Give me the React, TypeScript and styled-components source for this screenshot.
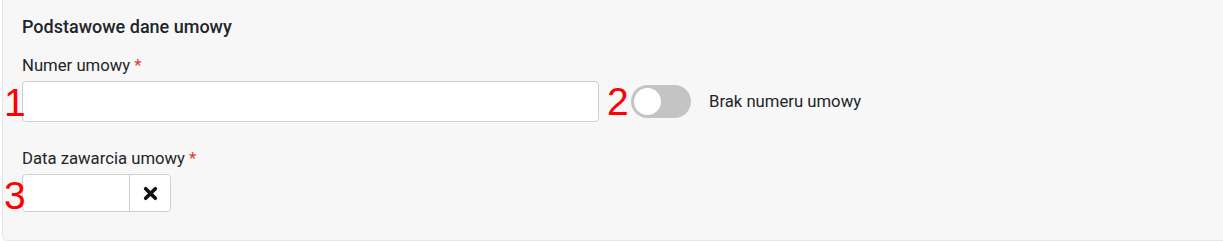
import React from "react";
import styled, { createGlobalStyle } from "styled-components";

const Global = createGlobalStyle`
  html, body { margin: 0; padding: 0; background: #ffffff; }
  body { font-family: Roboto, "Noto Sans", sans-serif; color: #212529; }
`;

const Panel = styled.section`
  margin: -10px 0 0 2px;
  padding: 27px 20px 28px 19px;
  background: #f7f7f7;
  border: 1px solid #e6e6e6;
  border-top: none;
  border-right: none;
  border-radius: 0 0 0 5px;
  box-sizing: border-box;
  height: 251px;
`;

const Title = styled.h3`
  margin: 0 0 20px 0;
  font-size: 18px;
  font-weight: 500;
  line-height: 20px;
  color: #212529;
`;

const Field = styled.div`
  margin-bottom: 28px;
`;

const Label = styled.label`
  display: block;
  font-size: 16.7px;
  line-height: 18px;
  margin-bottom: 6px;
  color: #212529;
`;

const Req = styled.span`
  color: #e53935;
  margin-left: 4px;
`;

const Row = styled.div`
  display: flex;
  align-items: center;
`;

const Marked = styled.div`
  position: relative;
  display: flex;
`;

const Mark = styled.span<{ $left: number; $top: number }>`
  position: absolute;
  left: ${(p) => p.$left}px;
  top: ${(p) => p.$top}px;
  font-family: "Liberation Sans", Arial, sans-serif;
  font-size: 39px;
  line-height: 39px;
  color: #ff0000;
  pointer-events: none;
`;

const TextInput = styled.input`
  width: 577px;
  height: 41px;
  box-sizing: border-box;
  border: 1px solid #cfcfcf;
  border-radius: 4px;
  background: #fff;
  font: inherit;
  padding: 0 10px;
  outline: none;
`;

const Toggle = styled.div`
  margin-left: 32px;
  width: 60px;
  height: 33px;
  border-radius: 17px;
  background: #c4c4c4;
  position: relative;
  flex: none;
`;

const Knob = styled.span`
  position: absolute;
  left: 3px;
  top: 3px;
  width: 27px;
  height: 27px;
  border-radius: 50%;
  background: #fff;
`;

const ToggleLabel = styled.span`
  margin-left: 18px;
  font-size: 16.7px;
  color: #212529;
`;

const DateGroup = styled.div`
  display: flex;
  width: 149px;
  height: 38px;
  box-sizing: border-box;
  border: 1px solid #cfcfcf;
  border-radius: 4px;
  background: #fff;
  overflow: hidden;
`;

const DateInput = styled.input`
  flex: 1;
  min-width: 0;
  border: none;
  outline: none;
  font: inherit;
  padding: 0 8px;
  background: transparent;
`;

const ClearBtn = styled.button`
  width: 41px;
  flex: none;
  border: none;
  border-left: 1px solid #cfcfcf;
  background: #fff;
  display: flex;
  align-items: center;
  justify-content: center;
  padding: 0;
`;

export default function App() {
  return (
    <>
      <Global />
      <Panel>
        <Title>Podstawowe dane umowy</Title>
        <Field>
          <Label>
            Numer umowy<Req>*</Req>
          </Label>
          <Row>
            <Marked>
              <TextInput />
              <Mark $left={-18} $top={2}>1</Mark>
            </Marked>
            <Marked>
              <Toggle>
                <Knob />
              </Toggle>
              <Mark $left={8} $top={-3}>2</Mark>
            </Marked>
            <ToggleLabel>Brak numeru umowy</ToggleLabel>
          </Row>
        </Field>
        <Field>
          <Label>
            Data zawarcia umowy<Req>*</Req>
          </Label>
          <Marked>
            <DateGroup>
              <DateInput />
              <ClearBtn>
                <svg width="15" height="15" viewBox="0 0 14 14">
                  <path d="M2.5 2.5 L11.5 11.5 M11.5 2.5 L2.5 11.5" stroke="#111" strokeWidth="3.4" strokeLinecap="round" />
                </svg>
              </ClearBtn>
            </DateGroup>
            <Mark $left={-18} $top={2}>3</Mark>
          </Marked>
        </Field>
      </Panel>
    </>
  );
}
